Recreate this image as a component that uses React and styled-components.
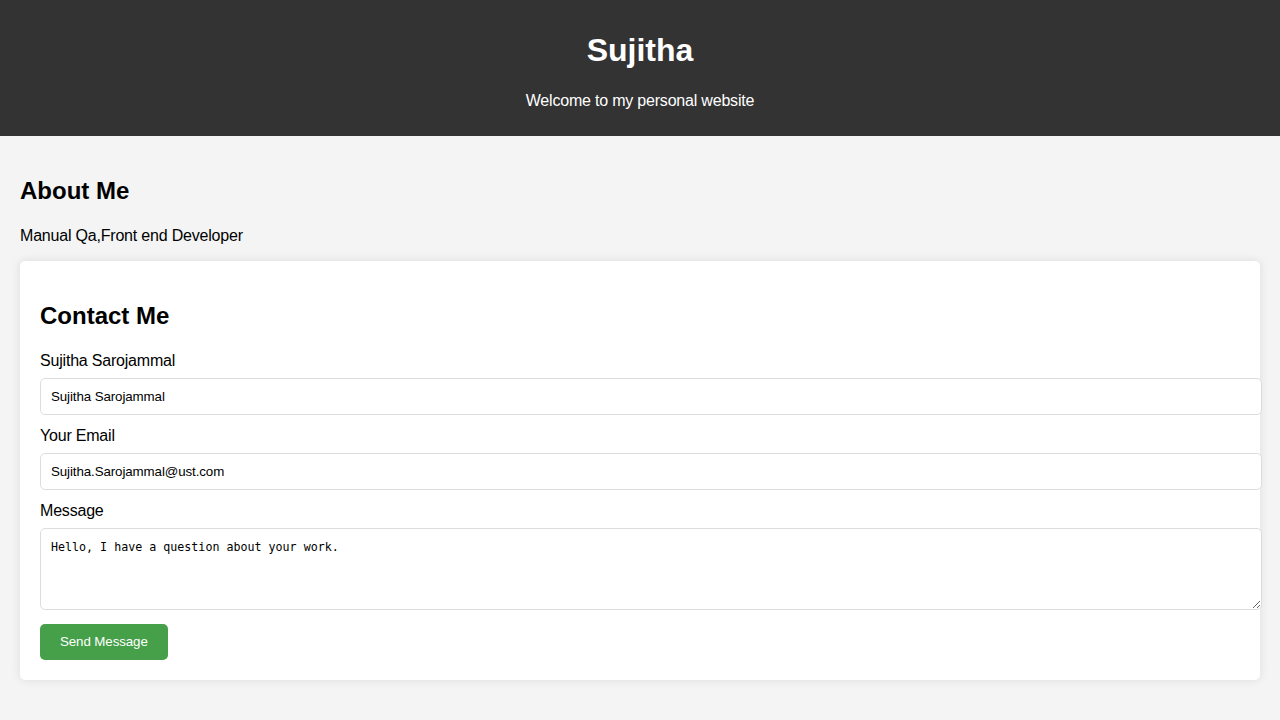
import React from "react";
import styled, { createGlobalStyle } from "styled-components";

const GlobalStyle = createGlobalStyle`
  html, body {
    margin: 0;
    padding: 0;
  }
  body {
    font-family: "Liberation Sans", Arial, sans-serif;
    background: #f4f4f4;
    color: #000;
  }
`;

const Header = styled.header`
  background: #333;
  color: #fff;
  text-align: center;
  padding: 11px 0 10px;
`;

const SiteTitle = styled.h1`
  font-size: 32px;
  font-weight: bold;
  margin: 21.44px 0 22.5px;
`;

const Tagline = styled.p`
  font-size: 16px;
  letter-spacing: -0.2px;
  margin: 16px 0;
`;

const Main = styled.main`
  padding: 21px 20px 20px;
`;

const Section = styled.section`
  margin-bottom: 16px;
`;

const Card = styled.section`
  background: #fff;
  padding: 20px;
  border-radius: 5px;
  box-shadow: 0 0 10px rgba(0, 0, 0, 0.1);
  margin-bottom: 20px;
`;

const SectionTitle = styled.h2`
  font-size: 24px;
  font-weight: bold;
  margin: ${(p) => (p.$tight ? "19.92px 0 22px" : "21px 0 22.5px")};
`;

const Text = styled.p`
  font-size: 16px;
  letter-spacing: -0.2px;
  margin: 16px 0;
`;

const Form = styled.form`
  margin: 0;
`;

const Label = styled.label`
  display: block;
  font-size: 16px;
  letter-spacing: -0.2px;
  margin: 12px 0 8px;
`;

const Field = styled.input`
  display: block;
  box-sizing: content-box;
  width: 100%;
  height: 15px;
  line-height: 15px;
  padding: 10px;
  margin: 0;
  border: 1px solid #ddd;
  border-radius: 5px;
  font-family: "Liberation Sans", Arial, sans-serif;
  font-size: 13.333px;
  letter-spacing: -0.1px;
  color: #000;
  background: #fff;
  outline: none;
`;

const MessageArea = styled.textarea`
  display: block;
  box-sizing: content-box;
  width: 100%;
  height: 59px;
  padding: 11px 10px 10px;
  margin: 0 0 14px;
  border: 1px solid #ddd;
  border-radius: 5px;
  font-family: "DejaVu Sans Mono", "Liberation Mono", monospace;
  font-size: 11.67px;
  color: #000;
  background: #fff;
  outline: none;
`;

const SubmitButton = styled.button`
  display: inline-block;
  background: #45a049;
  color: #fff;
  border: none;
  border-radius: 5px;
  padding: 10px 20px;
  line-height: 16px;
  font-family: "Liberation Sans", Arial, sans-serif;
  font-size: 13.333px;
  letter-spacing: -0.1px;
  cursor: pointer;
`;

export default function App() {
  return (
    <>
      <GlobalStyle />
      <Header>
        <SiteTitle>Sujitha</SiteTitle>
        <Tagline>Welcome to my personal website</Tagline>
      </Header>
      <Main>
        <Section>
          <SectionTitle $tight>About Me</SectionTitle>
          <Text>Manual Qa,Front end Developer</Text>
        </Section>
        <Card>
          <SectionTitle>Contact Me</SectionTitle>
          <Form onSubmit={(e) => e.preventDefault()}>
            <Label htmlFor="name">Sujitha Sarojammal</Label>
            <Field id="name" type="text" defaultValue="Sujitha Sarojammal" />
            <Label htmlFor="email">Your Email</Label>
            <Field id="email" type="email" defaultValue="Sujitha.Sarojammal@ust.com" />
            <Label htmlFor="message">Message</Label>
            <MessageArea id="message" defaultValue="Hello, I have a question about your work." />
            <SubmitButton type="submit">Send Message</SubmitButton>
          </Form>
        </Card>
      </Main>
    </>
  );
}
